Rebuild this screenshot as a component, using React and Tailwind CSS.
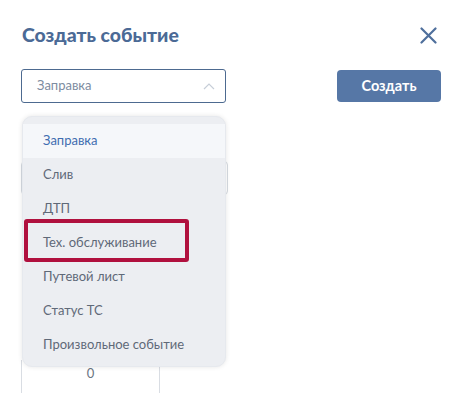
import React, { useState } from "react";

const options = [
  "Заправка",
  "Слив",
  "ДТП",
  "Тех. обслуживание",
  "Путевой лист",
  "Статус ТС",
  "Произвольное событие",
];

const App = () => {
  const [selected, setSelected] = useState("Заправка");
  const [open, setOpen] = useState(true);

  return (
    <div className="relative w-[450px] h-[393px] overflow-hidden bg-white font-['Lato','Noto_Sans',sans-serif]">
      <div className="flex items-center justify-between pl-[22px] pr-[13px] pt-[23px]">
        <h1 className="text-[19.4px] leading-[24px] font-black text-[#4b6a96]">
          Создать событие
        </h1>
        <button className="w-[18px] h-[18px] flex items-center justify-center">
          <svg width="17" height="17" viewBox="0 0 17 17" fill="none">
            <path
              d="M1.5 1.5L15.5 15.5M15.5 1.5L1.5 15.5"
              stroke="#4f6f9c"
              strokeWidth="2.2"
              strokeLinecap="round"
            />
          </svg>
        </button>
      </div>

      <div className="flex items-center pl-[21px] pr-[9px] mt-[22px]">
        <button
          onClick={() => setOpen(!open)}
          className="w-[205px] h-[34px] flex items-center justify-between pl-[15px] pr-[10px] border border-[#4d6a90] rounded-[3px] text-[13px] text-[#7d8ca1]"
        >
          <span>{selected}</span>
          <svg width="12" height="7" viewBox="0 0 12 7" fill="none">
            <path d="M1 6L6 1L11 6" stroke="#c7ced8" strokeWidth="1.2" />
          </svg>
        </button>
        <button className="ml-auto w-[104px] h-[32px] rounded-[4px] bg-[#5677a6] text-white text-[14.5px] font-bold">
          Создать
        </button>
      </div>

      {/* content under the menu */}
      <div className="pl-[21px] mt-[58px]">
        <div className="w-[207px] h-[34px] border border-[#d5dae1] rounded-[4px]" />
        <div className="mt-[165px] w-[139px] h-[40px] border-x border-[#d9dde3] flex items-start justify-center pt-[4px]">
          <span className="text-[13px] text-[#6b7482]">0</span>
        </div>
      </div>

      {open && (
        <div className="absolute left-[22px] top-[116px] w-[204px] h-[251px] rounded-[10px] bg-[#eceef2] pt-[7px] shadow-[0_0_5px_rgba(0,0,0,0.1)] border border-[#e6e9ee]">
          {options.map((opt) => (
            <div
              key={opt}
              onClick={() => setSelected(opt)}
              className={
                opt === selected
                  ? "h-[34px] flex items-center pl-[20px] text-[13px] bg-[#f5f7fa] text-[#3f6db0]"
                  : "h-[34px] flex items-center pl-[20px] text-[13px] text-[#5f6978]"
              }
            >
              {opt}
            </div>
          ))}
          <div className="absolute left-[1px] top-[102px] w-[165px] h-[43px] border-[4px] border-[#b0103e] rounded-[3px] pointer-events-none" />
        </div>
      )}
    </div>
  );
};

export default App;
